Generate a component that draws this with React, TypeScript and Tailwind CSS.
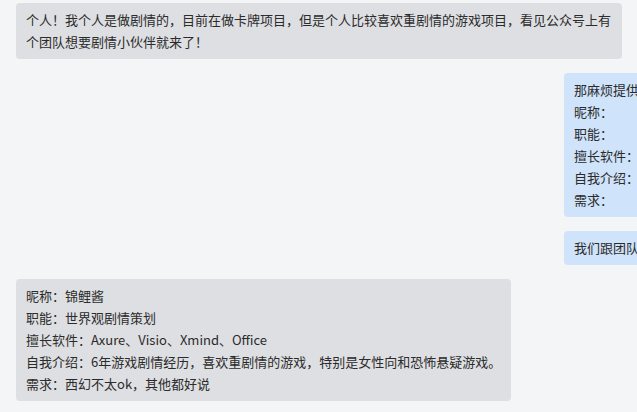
const font = "font-['Microsoft_YaHei','Noto_Sans_CJK_SC',sans-serif]"

const profile = [
  '昵称：锦鲤酱',
  '职能：世界观剧情策划',
  '擅长软件：Axure、Visio、Xmind、Office',
  '自我介绍：6年游戏剧情经历，喜欢重剧情的游戏，特别是女性向和恐怖悬疑游戏。',
  '需求：西幻不太ok，其他都好说',
]

const askLines = ['那麻烦提供一下以下信息哦～', '昵称：', '职能：', '擅长软件：', '自我介绍：', '需求：']

function Bubble({ side, children }: { side: 'left' | 'right'; children: React.ReactNode }) {
  if (side === 'right') {
    return (
      <div className="pl-[548px]">
        <div className="w-max rounded-[4px] bg-[#cfe3fa] px-[10px] py-[6px] whitespace-nowrap">{children}</div>
      </div>
    )
  }
  return (
    <div className="w-max max-w-[606px] rounded-[4px] bg-[#dedfe2] px-[10px] py-[6px]">{children}</div>
  )
}

export default function App() {
  return (
    <div className={`w-[637px] h-[412px] overflow-hidden bg-[#f4f5f6] text-[13px] leading-[22px] text-[#2b2b2b] ${font}`}>
      <div className="flex flex-col gap-[14px] px-4 pt-[3px]">
        <Bubble side="left">
          个人！我个人是做剧情的，目前在做卡牌项目，但是个人比较喜欢重剧情的游戏项目，看见公众号上有个团队想要剧情小伙伴就来了！
        </Bubble>
        <Bubble side="right">
          {askLines.map((l) => (
            <div key={l}>{l}</div>
          ))}
        </Bubble>
        <Bubble side="right">我们跟团队沟通一下，稍后回复你哦</Bubble>
        <Bubble side="left">
          {profile.map((l) => (
            <div key={l}>{l}</div>
          ))}
        </Bubble>
      </div>
    </div>
  )
}
